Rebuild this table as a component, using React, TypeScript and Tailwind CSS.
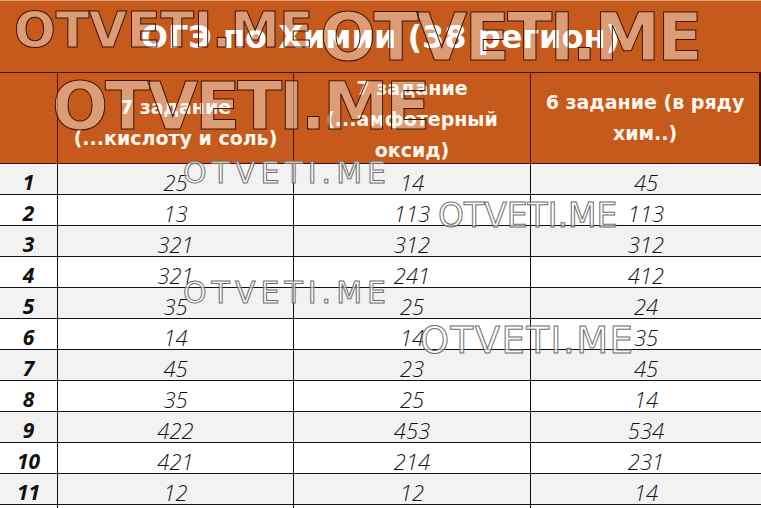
import React from "react";

const rows: [string, string, string][] = [
  ["25", "14", "45"],
  ["13", "113", "113"],
  ["321", "312", "312"],
  ["321", "241", "412"],
  ["35", "25", "24"],
  ["14", "14", "35"],
  ["45", "23", "45"],
  ["35", "25", "14"],
  ["422", "453", "534"],
  ["421", "214", "231"],
  ["12", "12", "14"],
];

const headFont = "font-['DejaVu_Sans',sans-serif]";

// big watermark in the orange part
const BigMark = ({ className }: { className: string }) => (
  <div
    className={`pointer-events-none absolute whitespace-nowrap leading-none font-bold font-['DejaVu_Sans',sans-serif] text-white/40 [-webkit-text-stroke:1px_#3a1406] ${className}`}
  >
    OTVETI.ME
  </div>
);

// thin outlined watermark over the rows
const SmallMark = ({ className }: { className: string }) => (
  <div
    className={`pointer-events-none absolute whitespace-nowrap leading-none font-['DejaVu_Sans',sans-serif] text-white/60 [-webkit-text-stroke:1px_#6e6e6e] ${className}`}
  >
    OTVETI.ME
  </div>
);

export default function App() {
  return (
    <div className="relative w-[761px] h-[508px] overflow-hidden bg-white">
      {/* title */}
      <div
        className={`h-[73px] bg-[#c55a1c] border-t border-t-[#e2a274] border-b border-b-[#4a0e0c] flex items-center justify-center ${headFont}`}
      >
        <span className="text-white text-[32px] font-bold">ОГЭ по Химии (38 регион)</span>
      </div>

      {/* column heads */}
      <div
        className={`grid grid-cols-[58px_236px_237px_1fr] h-[91px] bg-[#c55a1c] border-b border-[#4a0e0c] text-[#fff6ec] text-[19px] font-bold leading-[31px] text-center ${headFont}`}
      >
        <div className="border-r border-[#4a0e0c]" />
        <div className="border-r border-[#4a0e0c] flex flex-col justify-center pt-1.5">
          <span>7 задание</span>
          <span>(...кислоту и соль)</span>
        </div>
        <div className="border-r border-[#4a0e0c] flex flex-col justify-center whitespace-nowrap">
          <span>7 задание</span>
          <span>(...амфотерный</span>
          <span>оксид)</span>
        </div>
        <div className="border-r-2 border-[#4a0e0c] flex flex-col justify-center pb-1">
          <span>6 задание (в ряду</span>
          <span>хим..)</span>
        </div>
      </div>

      {/* answers */}
      {rows.map((r, i) => (
        <div
          key={i}
          className={`grid grid-cols-[58px_236px_237px_1fr] h-[31px] border-b border-[#111] text-[#111] text-[22px] italic ${
            i % 2 === 0 ? "bg-[#f2f2f2]" : "bg-white"
          } font-['Open_Sans','DejaVu_Sans',sans-serif]`}
        >
          <div className="border-r border-[#111] flex items-center justify-center pt-0.5 text-[21px] font-bold">
            {i + 1}
          </div>
          <div className="border-r border-[#111] flex items-center justify-center pt-0.5 font-light">{r[0]}</div>
          <div className="border-r border-[#111] flex items-center justify-center pt-0.5 font-light">{r[1]}</div>
          <div className="flex items-center justify-center pt-0.5 font-light">{r[2]}</div>
        </div>
      ))}
      <div className="grid grid-cols-[58px_236px_237px_1fr] h-[4px]">
        <div className="border-r border-[#111]" />
        <div className="border-r border-[#111]" />
        <div className="border-r border-[#111]" />
        <div />
      </div>

      <BigMark className="left-[14px] top-[6px] text-[49px]" />
      <BigMark className="left-[320px] top-[5px] text-[66px] tracking-[-2.5px]" />
      <BigMark className="left-[52px] top-[74px] text-[66px] tracking-[-3px]" />
      <SmallMark className="left-[183px] top-[158px] text-[30px] tracking-[5px]" />
      <SmallMark className="left-[438px] top-[199px] text-[33px]" />
      <SmallMark className="left-[183px] top-[278px] text-[30px] tracking-[5px]" />
      <SmallMark className="left-[420px] top-[322px] text-[37px] tracking-[1.5px]" />
    </div>
  );
}
